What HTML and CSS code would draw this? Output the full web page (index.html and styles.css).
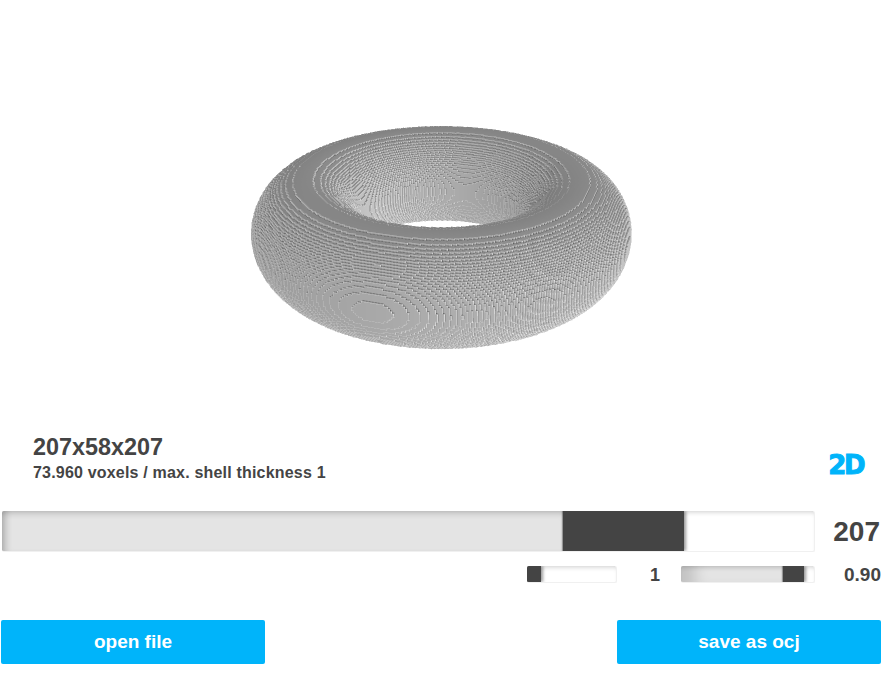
FILE: index.html
```html
<!DOCTYPE html>
<html lang="en">
<head>
<meta charset="utf-8">
<title>Voxel viewer</title>
<link rel="stylesheet" href="styles.css">
</head>
<body>
<main class="page">
  <section class="viewer">
    <canvas id="torus" class="torus" width="800" height="480" aria-label="Voxel torus"></canvas>
  </section>

  <section class="info">
    <div>
      <h1 class="dims">207x58x207</h1>
      <p class="meta">73.960 voxels / max. shell thickness 1</p>
    </div>
    <span class="mode">2D</span>
  </section>

  <section class="main-control">
    <div class="track track-large">
      <div class="fill fill-large"></div>
      <div class="thumb thumb-large"></div>
    </div>
    <output class="value-large">207</output>
  </section>

  <section class="sub-controls">
    <div class="track track-shell">
      <div class="thumb thumb-shell"></div>
    </div>
    <output class="value-small value-shell">1</output>
    <div class="track track-iso">
      <div class="fill fill-iso"></div>
      <div class="thumb thumb-iso"></div>
    </div>
    <output class="value-small value-iso">0.90</output>
  </section>

  <section class="actions">
    <button class="btn" type="button">open file</button>
    <button class="btn" type="button">save as ocj</button>
  </section>
</main>
<script src="torus.js"></script>
</body>
</html>
```

FILE: styles.css
```css
* { box-sizing: border-box; }

html, body {
  margin: 0;
  padding: 0;
  background: #fff;
  overflow: hidden;
}

.page {
  width: 886px;
  height: 673px;
  font-family: "Liberation Sans", Arial, sans-serif;
  font-weight: 700;
  color: #444;
}

.viewer {
  height: 432px;
  padding: 117px 0 0 242px;
}

.torus {
  display: block;
  width: 400px;
  height: 240px;
  filter: blur(.3px);
}

.info {
  height: 79px;
  padding: 0 23px 0 33px;
  display: flex;
  justify-content: space-between;
  align-items: flex-start;
}

.dims {
  margin: 2px 0 0;
  font-size: 23.4px;
  line-height: 27px;
  font-weight: 700;
}

.meta {
  margin: 3px 0 0;
  font-size: 16px;
  line-height: 18px;
  letter-spacing: .19px;
}

.mode {
  margin-top: 17px;
  font-family: "DejaVu Sans", sans-serif;
  font-size: 26px;
  line-height: 32px;
  letter-spacing: -2.5px;
  color: #00b4fa;
  -webkit-text-stroke: 1px #00b4fa;
}

.main-control {
  display: flex;
  padding-left: 2px;
  height: 41px;
  align-items: stretch;
}

.track {
  display: flex;
  background: #fff;
  border: 1px solid #f0f0f0;
  border-width: 0 1px 1px 0;
  border-radius: 2px;
  overflow: hidden;
  box-shadow: inset 0 4px 5px -3px rgba(0, 0, 0, .2);
}

.track-large { width: 813px; }
.track-shell { width: 90px; height: 17px; }
.track-iso { width: 134px; height: 17px; }

.fill {
  background: #e4e4e4;
  box-shadow: inset 0 5px 6px -3px rgba(0, 0, 0, .2), inset 8px 0 6px -4px rgba(0, 0, 0, .2);
}

.fill-large { width: 561px; }
.fill-iso {
  width: 102px;
  box-shadow: inset 0 4px 5px -3px rgba(0, 0, 0, .2), inset 22px 0 14px -8px rgba(0, 0, 0, .14);
}

.thumb {
  position: relative;
  background: #444;
  box-shadow: 2px 0 3px rgba(0, 0, 0, .4), -1px 0 1px rgba(0, 0, 0, .3);
}

.thumb-large { width: 121px; }
.thumb-shell { width: 14px; }
.thumb-iso { width: 21px; }

.value-large {
  width: 65px;
  text-align: right;
  font-size: 28px;
  line-height: 41px;
}

.sub-controls {
  margin-top: 14px;
  height: 17px;
  display: flex;
  align-items: center;
  padding-left: 527px;
}

.value-small {
  font-size: 18px;
  line-height: 18px;
  text-align: right;
}

.value-shell { width: 43px; margin-right: 21px; }
.value-iso { width: 66px; font-size: 19px; }

.actions {
  margin-top: 37px;
  padding: 0 5px 0 1px;
  display: flex;
  justify-content: space-between;
}

.btn {
  width: 264px;
  height: 44px;
  border: 0;
  border-radius: 2px;
  padding: 0;
  background: #00b4fa;
  color: #fff;
  font-family: inherit;
  font-size: 19px;
  font-weight: 700;
}
```

FILE: torus.js
```js
// Renders the 207x58x207 voxel torus by casting one perspective ray per sub-pixel.
(function () {
  var canvas = document.getElementById('torus');
  var ctx = canvas.getContext('2d');
  var W = canvas.width, H = canvas.height;
  var SS = 2;                 // backing pixels per CSS pixel
  var CX = 199.5 * SS, CY = 106.5 * SS;
  var DIST = 540;             // camera distance, voxels
  var FOCAL = 1.8 * DIST * SS;

  var NX = 207, NY = 58, NZ = 207;
  var R = (NX - NY) / 2, r = NY / 2;
  var grid = new Uint8Array(NX * NY * NZ);
  function idx(i, j, k) { return i + NX * (j + NY * k); }
  for (var k = 0; k < NZ; k++) {
    for (var j = 0; j < NY; j++) {
      for (var i = 0; i < NX; i++) {
        var x = i + .5 - NX / 2, y = j + .5 - NY / 2, z = k + .5 - NZ / 2;
        var q = Math.sqrt(x * x + z * z) - R;
        if (q * q + y * y <= r * r) grid[idx(i, j, k)] = 1;
      }
    }
  }
  function solid(i, j, k) {
    if (i < 0 || j < 0 || k < 0 || i >= NX || j >= NY || k >= NZ) return 0;
    return grid[idx(i, j, k)];
  }

  var theta = 24.8 * Math.PI / 180, phi = 18 * Math.PI / 180;
  var st = Math.sin(theta), ct = Math.cos(theta), sp = Math.sin(phi), cp = Math.cos(phi);
  var cam = [sp * ct, st, cp * ct];
  var right = [cp, 0, -sp];
  var up = [-sp * st, ct, -cp * st];
  var size = [NX, NY, NZ];
  var half = [NX / 2, NY / 2, NZ / 2];
  var eye = [cam[0] * DIST + half[0], cam[1] * DIST + half[1], cam[2] * DIST + half[2]];

  // brightness of a face by the axis it lies on and the side it looks to
  var FACE = [[0x70, 0xb0], [0x60, 0x86], [0x78, 0x9a]];
  // soft light from the front right, on the true surface normal of the torus
  var LIGHT = [.8, 0, .6], LIGHT_GAIN = 24;

  var img = ctx.createImageData(W, H);
  var px = img.data;
  var d = [0, 0, 0], inv = [0, 0, 0], step = [0, 0, 0], p = [0, 0, 0], next = [0, 0, 0], delta = [0, 0, 0];

  for (var py = 0; py < H; py++) {
    for (var pxi = 0; pxi < W; pxi++) {
      var sx = pxi + .5 - CX, sy = CY - py - .5;
      var tmin = 0, tmax = Infinity, axis = 1, a;
      for (a = 0; a < 3; a++) {
        d[a] = (right[a] * sx + up[a] * sy - cam[a] * FOCAL) / FOCAL;
        inv[a] = 1 / d[a];
        step[a] = d[a] < 0 ? -1 : 1;
        var t0 = (0 - eye[a]) * inv[a], t1 = (size[a] - eye[a]) * inv[a];
        if (t0 > t1) { var tt = t0; t0 = t1; t1 = tt; }
        if (t0 > tmin) { tmin = t0; axis = a; }
        if (t1 < tmax) tmax = t1;
      }
      if (tmin >= tmax) continue;
      for (a = 0; a < 3; a++) {
        var c = eye[a] + d[a] * (tmin + 1e-6);
        p[a] = Math.min(size[a] - 1, Math.max(0, Math.floor(c)));
        next[a] = ((p[a] + (step[a] > 0 ? 1 : 0)) - eye[a]) * inv[a];
        delta[a] = Math.abs(inv[a]);
      }
      var t = tmin, hit = false;
      while (true) {
        if (grid[idx(p[0], p[1], p[2])]) { hit = true; break; }
        axis = next[0] < next[1] ? (next[0] < next[2] ? 0 : 2) : (next[1] < next[2] ? 1 : 2);
        t = next[axis];
        if (t > tmax) break;
        p[axis] += step[axis];
        if (p[axis] < 0 || p[axis] >= size[axis]) break;
        next[axis] += delta[axis];
      }
      if (!hit) continue;

      var side = -step[axis];                 // the face looks against the ray
      var shade = FACE[axis][side > 0 ? 1 : 0];

      var wx = p[0] + .5 - half[0], wz = p[2] + .5 - half[2];
      var ring = Math.sqrt(wx * wx + wz * wz) || 1;
      var out = (ring - R) / r;               // -1 inner wall .. 1 outer wall
      shade += LIGHT_GAIN * out * (LIGHT[0] * wx + LIGHT[2] * wz) / ring;

      var u = (axis + 1) % 3, v = (axis + 2) % 3;
      var fu = eye[u] + d[u] * t - p[u], fv = eye[v] + d[v] * t - p[v];
      var n = [0, 0, 0];
      n[axis] = side;
      // bevel: dark in concave corners, bright on convex edges
      var edges = [[u, -1, fu], [u, 1, 1 - fu], [v, -1, fv], [v, 1, 1 - fv]];
      for (var e = 0; e < 4; e++) {
        if (edges[e][2] > .24) continue;
        var s = [p[0], p[1], p[2]];
        s[edges[e][0]] += edges[e][1];
        if (solid(s[0] + n[0], s[1] + n[1], s[2] + n[2])) shade -= 36;
        else if (!solid(s[0], s[1], s[2])) shade += 26;
      }
      var o4 = (py * W + pxi) * 4;
      px[o4] = px[o4 + 1] = px[o4 + 2] = Math.max(0, Math.min(255, shade));
      px[o4 + 3] = 255;
    }
  }
  ctx.putImageData(img, 0, 0);
})();
```
